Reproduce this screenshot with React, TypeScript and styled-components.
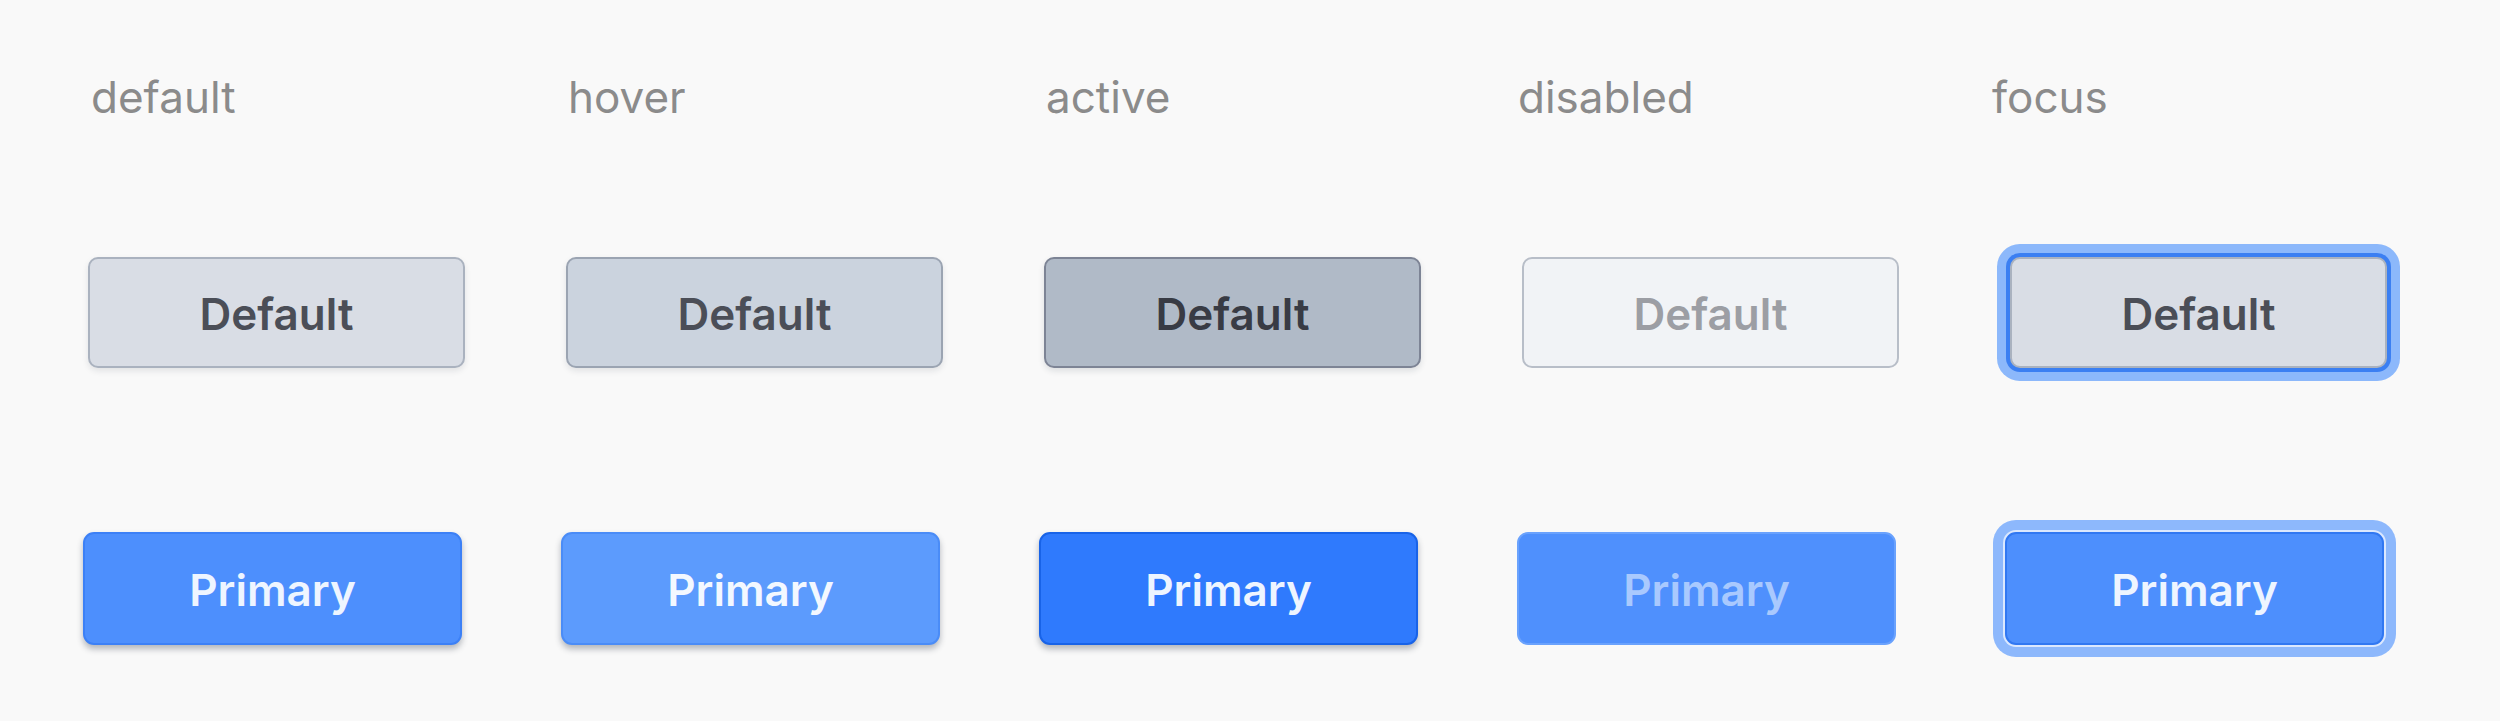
import React from "react";
import styled, { createGlobalStyle, css } from "styled-components";

const GlobalStyle = createGlobalStyle`
  html, body {
    margin: 0;
    padding: 0;
    background: #f9f9f9;
  }
  body {
    font-family: Inter, "Noto Sans", "Liberation Sans", sans-serif;
  }
`;

type Variant = "default" | "primary";
type State = "default" | "hover" | "active" | "disabled" | "focus";

const STATES: State[] = ["default", "hover", "active", "disabled", "focus"];

const Page = styled.main`
  width: 2500px;
  height: 721px;
  padding-top: 70px;
  box-sizing: border-box;
  background: #f9f9f9;
`;

const LabelRow = styled.header`
  display: grid;
  grid-template-columns: 477px 478px 472px 474px auto;
  align-items: center;
  height: 54px;
  padding-left: 91px;
`;

const Row = styled.section<{ $inset: number; $top: number }>`
  display: grid;
  grid-template-columns: repeat(5, 478px);
  align-items: center;
  padding-left: ${(p) => p.$inset}px;
  margin-top: ${(p) => p.$top}px;
  height: 140px;
`;

const Label = styled.div`
  font-family: Inter, "Noto Sans", sans-serif;
  font-size: 44px;
  line-height: 54px;
  font-weight: 400;
  color: #8b8b8b;
`;

const Cell = styled.div<{ $focus: boolean }>`
  display: flex;
  align-items: center;
  padding-left: ${(p) => (p.$focus ? 10 : 0)}px;
`;

const palette = {
  default: {
    default: { bg: "#d9dde5", border: "#aab2bf", color: "#4b4e57", shadow: "0 3px 6px rgba(20, 30, 50, 0.10)" },
    hover: { bg: "#cbd3de", border: "#9ba4b2", color: "#4b4e57", shadow: "0 3px 6px rgba(20, 30, 50, 0.10)" },
    active: { bg: "#b0bac7", border: "#7d8495", color: "#383b44", shadow: "0 3px 6px rgba(20, 30, 50, 0.12)" },
    disabled: { bg: "#f1f3f6", border: "#b8bec8", color: "#9c9ea4", shadow: "none" },
    focus: {
      bg: "#d9dde5",
      border: "#aab2bf",
      color: "#4b4e57",
      shadow: "0 0 0 4px #3b7ff2, 0 0 0 13px #8cb8fb",
    },
  },
  primary: {
    default: { bg: "#4d8ffd", border: "#3c80f6", color: "#eef5ff", shadow: "0 4px 6px rgba(30, 40, 60, 0.32)" },
    hover: { bg: "#5c9bfd", border: "#4a8cf7", color: "#f3f8ff", shadow: "0 4px 6px rgba(30, 40, 60, 0.32)" },
    active: { bg: "#2f7afd", border: "#1863e8", color: "#eef5ff", shadow: "0 4px 6px rgba(30, 40, 60, 0.32)" },
    disabled: { bg: "#4f90fd", border: "#6aa2fd", color: "#a9c9fe", shadow: "none" },
    focus: {
      bg: "#4d8ffd",
      border: "#3178f2",
      color: "#eef5ff",
      shadow: "0 0 0 2px #dbe8fe, 0 0 0 12px #8db8fc",
    },
  },
} as const;

const Button = styled.button<{ $variant: Variant; $state: State }>`
  ${(p) => {
    const s = palette[p.$variant][p.$state];
    const primary = p.$variant === "primary";
    return css`
      width: ${primary ? 379 : 377}px;
      height: ${primary ? 113 : 111}px;
      background: ${s.bg};
      border: 2px solid ${s.border};
      color: ${s.color};
      box-shadow: ${s.shadow};
      border-radius: ${primary ? 11 : 10}px;
    `;
  }}
  box-sizing: border-box;
  display: flex;
  align-items: center;
  justify-content: center;
  padding: 4px 0 0;
  font-family: Inter, "Noto Sans", sans-serif;
  font-size: 44px;
  font-weight: 600;
  letter-spacing: 0;
  cursor: pointer;
  &:disabled {
    cursor: default;
  }
`;

const ButtonRow: React.FC<{ variant: Variant; text: string; inset: number; top: number }> = ({
  variant,
  text,
  inset,
  top,
}) => (
  <Row $inset={inset} $top={top}>
    {STATES.map((state) => (
      <Cell key={state} $focus={state === "focus"}>
        <Button type="button" $variant={variant} $state={state} disabled={state === "disabled"}>
          {text}
        </Button>
      </Cell>
    ))}
  </Row>
);

export default function App() {
  return (
    <>
      <GlobalStyle />
      <Page>
        <LabelRow>
          {STATES.map((s) => (
            <Label key={s}>{s}</Label>
          ))}
        </LabelRow>
        <ButtonRow variant="default" text="Default" inset={88} top={118} />
        <ButtonRow variant="primary" text="Primary" inset={83} top={136} />
      </Page>
    </>
  );
}
